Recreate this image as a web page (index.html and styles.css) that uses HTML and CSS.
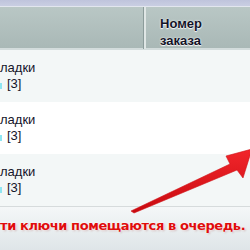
FILE: index.html
```html
<!DOCTYPE html>
<html lang="ru">
<head>
<meta charset="utf-8">
<title>Ключи</title>
<link rel="stylesheet" href="styles.css">
</head>
<body>
<div class="page">
  <div class="topband"></div>
  <div class="head">
    <div class="hcell"></div>
    <div class="hcell hcell-num">Номер<br>заказа</div>
  </div>
  <div class="row row-alt">
    <div class="cell">ладки<br><span class="ico"></span>[3]</div>
    <div class="cell"></div>
  </div>
  <div class="row">
    <div class="cell">ладки<br><span class="ico"></span>[3]</div>
    <div class="cell"></div>
  </div>
  <div class="row row-alt">
    <div class="cell">ладки<br><span class="ico"></span>[3]</div>
    <div class="cell"></div>
  </div>
  <div class="note">ти ключи помещаются в очередь.</div>

  <svg class="arrow" width="250" height="250" viewBox="0 0 250 250">
    <defs>
      <linearGradient id="ar" x1="0" y1="0" x2="0" y2="1">
        <stop offset="0" stop-color="#f2262b"/>
        <stop offset="1" stop-color="#c80a10"/>
      </linearGradient>
    </defs>
    <polygon points="131,211 230,164 226,156 252,149 243,178 237,170 134,213" fill="url(#ar)" stroke="#d01016" stroke-width="0.6" stroke-linejoin="round"/>
  </svg>
</div>
</body>
</html>
```
FILE: styles.css
```css
html, body {
  margin: 0;
  padding: 0;
  background: #ffffff;
}

.page {
  position: relative;
  width: 250px;
  height: 250px;
  overflow: hidden;
  font-family: "Liberation Sans", Arial, sans-serif;
  font-size: 13px;
  color: #15152a;
}

.topband {
  height: 6px;
  background: linear-gradient(#bfc4dc, #c9cee2);
  border-bottom: 1px solid #e2e6ee;
}

.head {
  display: grid;
  grid-template-columns: 143px 1fr;
  height: 41px;
  background: linear-gradient(#b9c7c5, #a9b8b6);
  border-bottom: 2px solid #d3dcdc;
}

.hcell-num {
  border-left: 1px solid #8c9c9b;
  box-shadow: inset 2px 0 0 #dfe6e5;
  padding: 8px 0 0 16px;
  font-weight: bold;
  line-height: 17px;
  color: #141428;
  text-shadow: 0 0 2px #ffffff, 0 1px 1px rgba(255, 255, 255, 0.9);
}

.row {
  display: grid;
  grid-template-columns: 143px 1fr;
  height: 52px;
  background: #ffffff;
}

.row-alt {
  background: #f3f7f7;
}

.cell {
  padding-top: 10px;
  line-height: 16px;
}

.ico {
  display: inline-block;
  width: 2px;
  height: 6px;
  margin-right: 5px;
  background: #8fe6f2;
  vertical-align: -1px;
}

.note {
  height: 44px;
  border-top: 1px solid #d6dbdc;
  background: linear-gradient(#f4f7f8, #dfe5e8);
  font-family: "DejaVu Sans", Verdana, sans-serif;
  font-weight: bold;
  font-size: 13px;
  letter-spacing: -0.4px;
  line-height: 16px;
  padding-top: 11px;
  box-sizing: border-box;
  color: #e00c0c;
  white-space: nowrap;
  text-shadow: 0 0 2px #ffffff, 0 0 3px #ffffff, 1px 1px 2px rgba(120, 0, 0, 0.3);
}

.arrow {
  position: absolute;
  left: 0;
  top: 0;
  pointer-events: none;
}
```
